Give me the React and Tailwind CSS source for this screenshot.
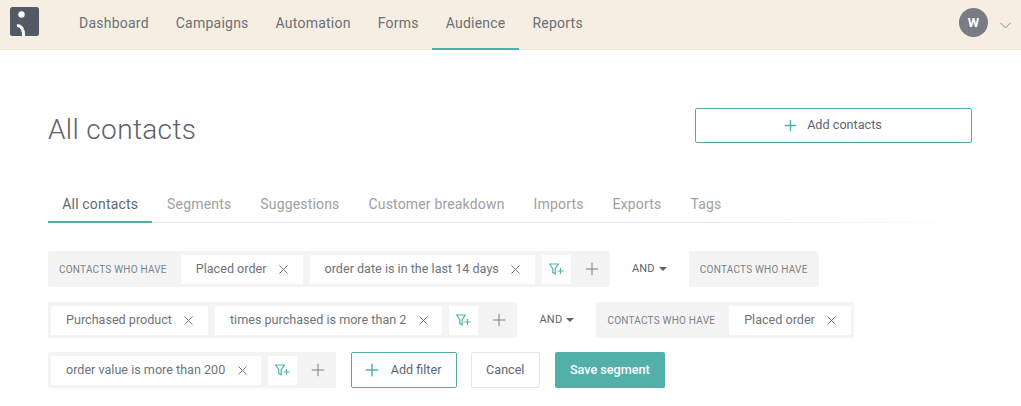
import React from 'react';
import { Plus, X, ChevronDown } from 'lucide-react';

function FilterPlus() {
    return (
        <svg width="15" height="12" viewBox="0 0 15 12" fill="none" stroke="#4fb3ad" strokeWidth="1.2">
            <path d="M0.7 1h8.6L6.2 5.6v5.2L3.8 9.6V5.6z" />
            <path d="M8.5 8h6M11.5 5v6" />
        </svg>
    );
}

function Chip({ children, ml = 'ml-0' }) {
    return (
        <div className={`h-[29px] bg-white flex items-center pl-[15px] pr-[11.5px] ${ml} rounded-[1px] text-[12.6px] text-[#6f747c] whitespace-nowrap`}>
            <span>{children}</span>
            <X size={15} strokeWidth={1.5} className="ml-[9.5px] text-[#6b7076]" />
        </div>
    );
}

function Label() {
    return <span className="px-[11px] text-[10px] tracking-[0.23px] text-[#7d8188] uppercase whitespace-nowrap">Contacts who have</span>;
}

function Tools() {
    return (
        <>
            <div className="ml-[7px] w-[29px] h-[29px] bg-white flex items-center justify-center">
                <FilterPlus />
            </div>
            <div className="w-[39px] pl-[3px] flex items-center justify-center">
                <Plus size={20} strokeWidth={1.2} className="text-[#7b7f86]" />
            </div>
        </>
    );
}

function Group({ children, className = '' }) {
    return <div className={`h-9 bg-[#f4f4f5] rounded-[2px] flex items-center ${className}`}>{children}</div>;
}

function And() {
    return (
        <div className="w-[79px] flex items-center justify-center text-[11px] text-[#5f6369] tracking-[0.2px]">
            AND
            <span className="ml-[4px] border-x-[4.5px] border-x-transparent border-t-[4.5px] border-t-[#5f6369]"></span>
        </div>
    );
}

export default function App() {
    const nav = ['Dashboard', 'Campaigns', 'Automation', 'Forms', 'Audience', 'Reports'];
    const tabs = ['All contacts', 'Segments', 'Suggestions', 'Customer breakdown', 'Imports', 'Exports', 'Tags'];

    return (
        <div className="w-[1021px] h-[406px] overflow-hidden bg-white font-['Roboto',sans-serif]">
            <header className="h-[50px] bg-[#f6eee2] border-b border-[#eee6da] flex items-center pl-[10px] pr-[6px]">
                <svg width="29" height="29" viewBox="0 0 29 29" className="-mt-[6px] shrink-0">
                    <rect width="29" height="29" rx="2.5" fill="#525a65" />
                    <circle cx="11.5" cy="7.5" r="3.2" fill="#fff" />
                    <path d="M7 18.5c4.5 0 6.5 3 6.7 10.5" fill="none" stroke="#fff" strokeWidth="3" />
                </svg>
                <nav className="ml-[26.5px] flex h-full">
                    {nav.map((n) => (
                        <a key={n} className={`h-[50px] px-[13.5px] pb-[2px] flex items-center border-b-2 text-[14px] tracking-[0.23px] text-[#6c7076] ${n === 'Audience' ? 'border-[#4fb0aa]' : 'border-transparent'}`}>{n}</a>
                    ))}
                </nav>
                <div className="ml-auto flex items-center">
                    <div className="-mt-[4px] w-[29px] h-[29px] rounded-full bg-[#7a7c84] text-white text-[13px] font-bold flex items-center justify-center">W</div>
                    <ChevronDown size={19} strokeWidth={1.2} className="ml-[8px] mt-[1px] text-[#7b7e84]" />
                </div>
            </header>

            <main className="pl-[48px] pr-[49px]">
                <div className="pt-[58px] flex items-start justify-between">
                    <h1 className="mt-[1px] text-[28px] leading-[41px] font-light tracking-[0.35px] text-[#5e6269]">All contacts</h1>
                    <button className="w-[277px] h-[35px] pb-[1px] pr-[3px] border border-[#55aaa6] rounded-[2px] flex items-center justify-center text-[12.65px] text-[#5f6670]">
                        <Plus size={17} strokeWidth={2} className="text-[#4fb3ad] mr-[8px]" />
                        Add contacts
                    </button>
                </div>

                <div className="mt-[35px] h-[38px] flex bg-[linear-gradient(to_right,#e5e5e5_70%,transparent)] bg-[length:100%_1px] bg-bottom bg-no-repeat">
                    {tabs.map((t, i) => (
                        <a key={t} className={`h-[38px] px-[14.25px] pt-[2px] flex items-center border-b-2 text-[14px] tracking-[0.17px] whitespace-nowrap ${i === 0 ? 'text-[#646870] border-[#4fb0aa]' : 'text-[#a0a0a0] border-transparent ml-[0.5px]'}`}>{t}</a>
                    ))}
                </div>

                <div className="mt-[28px] flex items-center">
                    <Group>
                        <Label />
                        <Chip ml="ml-[3px]">Placed order</Chip>
                        <Chip ml="ml-[7px]">order date is in the last 14 days</Chip>
                        <Tools />
                    </Group>
                    <And />
                    <Group><Label /></Group>
                </div>
                <div className="mt-[15px] flex items-center">
                    <Group className="pl-[3px]">
                        <Chip>Purchased product</Chip>
                        <Chip ml="ml-[7px]">times purchased is more than 2</Chip>
                        <Tools />
                    </Group>
                    <And />
                    <Group className="pr-[3px]">
                        <Label />
                        <Chip ml="ml-[3px]">Placed order</Chip>
                    </Group>
                </div>
                <div className="mt-[14px] flex items-center">
                    <Group className="pl-[3px]">
                        <Chip>order value is more than 200</Chip>
                        <Tools />
                    </Group>
                    <button className="ml-[14.5px] h-9 w-[106px] pl-[10px] border border-[#55aaa6] rounded-[2px] flex items-center text-[12.6px] text-[#5f6670]">
                        <Plus size={20} strokeWidth={1.8} className="text-[#4fb3ad] mr-[9px]" />
                        Add filter
                    </button>
                    <button className="ml-[14px] h-9 w-[69px] border border-[#e5e5e5] rounded-[2px] text-[12.6px] text-[#5f6670]">Cancel</button>
                    <button className="ml-[15px] h-9 w-[110px] bg-[#52b0ab] rounded-[2px] text-[12.6px] font-medium text-white">Save segment</button>
                </div>
            </main>
        </div>
    );
}
